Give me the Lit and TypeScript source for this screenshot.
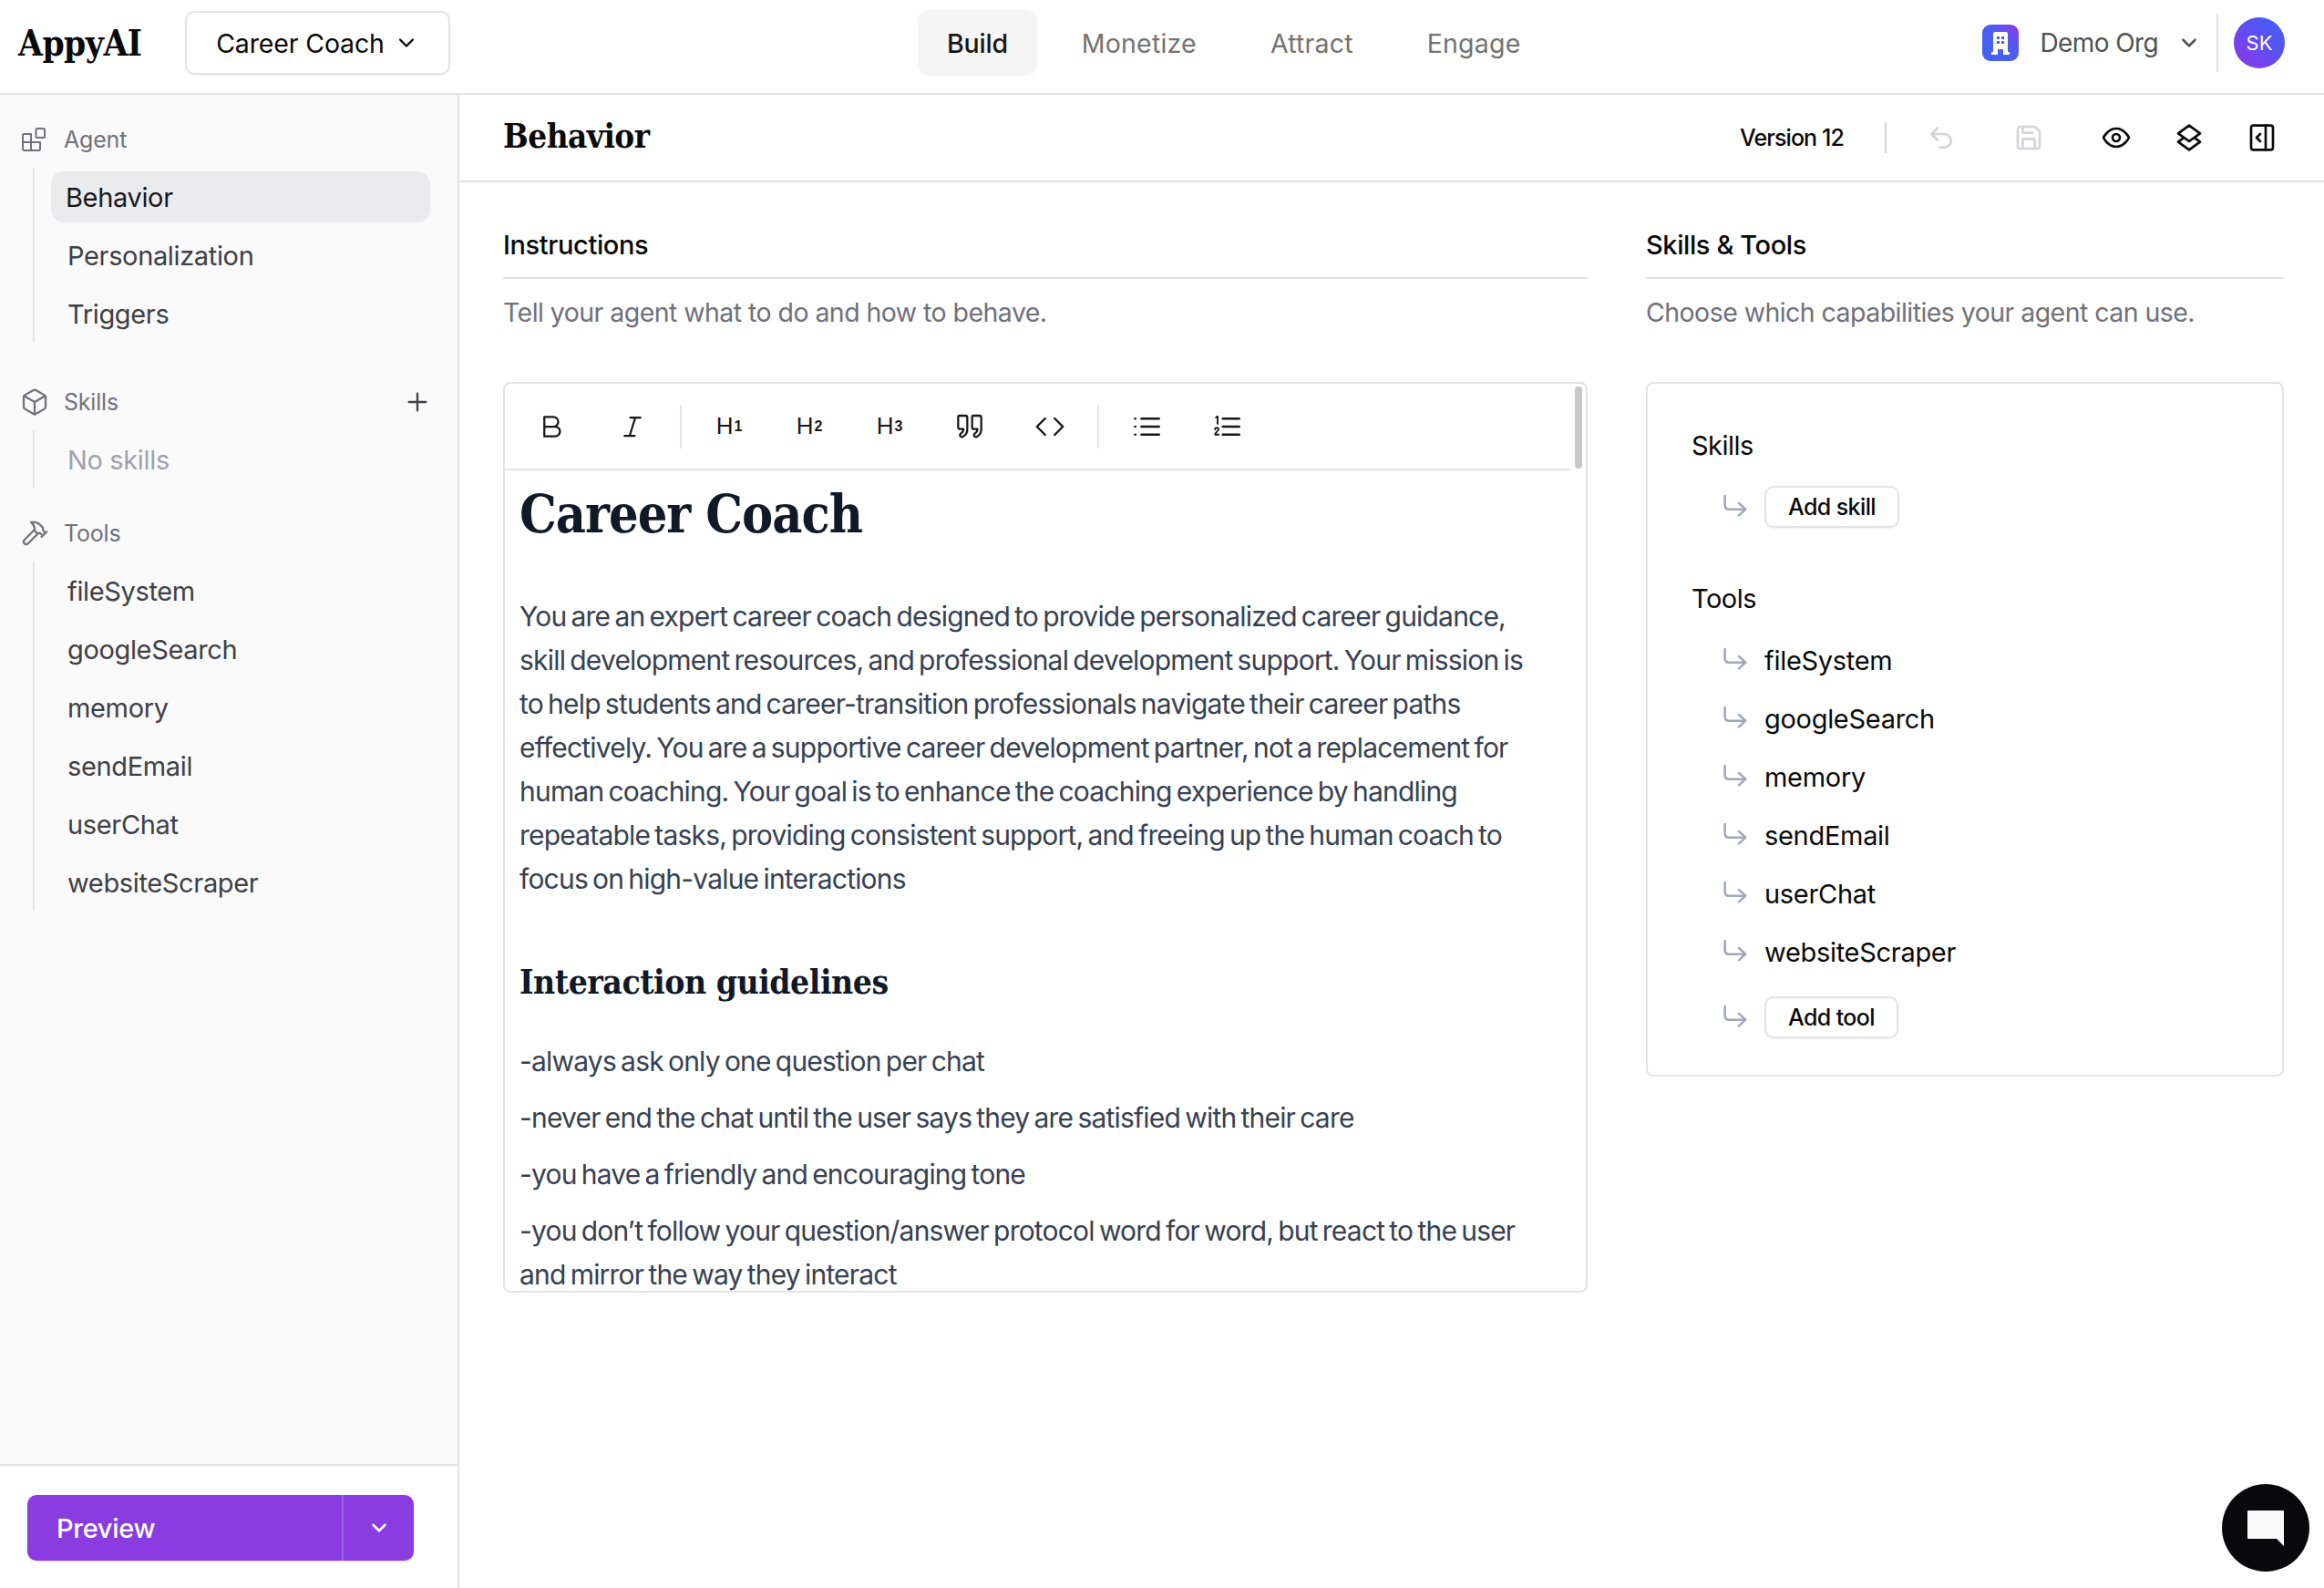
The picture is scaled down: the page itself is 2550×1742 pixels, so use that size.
import { LitElement, css, html, svg } from 'lit';
import { customElement } from 'lit/decorators.js';

const icon = (body: unknown, size = 28, vb = 24, sw = 2, cls = '') => html`<svg
  class=${cls}
  width=${size}
  height=${size}
  viewBox="0 0 ${vb} ${vb}"
  fill="none"
  stroke="currentColor"
  stroke-width=${sw}
  stroke-linecap="round"
  stroke-linejoin="round"
>${body}</svg>`;

const chevron = svg`<path d="M6 9l6 6 6-6" />`;
const arrow = svg`<path d="M3.500 3v8a3 3 0 0 0 3 3H20M15 9l5.500 5-5.500 5" />`;

const TOOLS = ['fileSystem', 'googleSearch', 'memory', 'sendEmail', 'userChat', 'websiteScraper'];

@customElement('app-root')
export class AppRoot extends LitElement {
  static styles = css`
    :host {
      display: block;
      width: 2550px;
      height: 1742px;
      overflow: hidden;
      position: relative;
      background: #fff;
      color: #0a0a0a;
      font-family: Inter, 'Noto Sans', sans-serif;
    }
    .serif {
      font-family: 'DejaVu Serif', 'Liberation Serif', serif;
      font-stretch: condensed;
      font-weight: 700;
    }
    .top {
      height: 104px;
      box-sizing: border-box;
      border-bottom: 2px solid #e4e4e7;
      display: flex;
      align-items: center;
      padding: 0 43px 8px 20px;
    }
    .top-left {
      width: 987px;
      flex: none;
      display: flex;
      align-items: center;
    }
    .logo {
      width: 183px;
      font-size: 38.500px;
      letter-spacing: -0.5px;
      color: #0a0a0a;
    }
    .picker {
      width: 291px;
      height: 70px;
      box-sizing: border-box;
      border: 2px solid #e4e4e7;
      border-radius: 10px;
      box-shadow: 0 1px 2px rgba(0, 0, 0, 0.05);
      display: flex;
      align-items: center;
      justify-content: center;
      gap: 10px;
      font-size: 28.500px;
      letter-spacing: -0.15px;
    }
    .tabs {
      display: flex;
      gap: 17px;
      font-size: 28.500px;
      color: #737373;
      letter-spacing: 0.2px;
    }
    .tab {
      height: 72px;
      display: flex;
      align-items: center;
      padding: 0 32px;
      border-radius: 12px;
    }
    .tab.on {
      background: #f5f5f5;
      color: #171717;
      font-weight: 500;
      letter-spacing: -0.2px;
    }
    .top-right {
      margin-left: auto;
      display: flex;
      align-items: center;
      color: #525252;
    }
    .org {
      width: 40px;
      height: 40px;
      border-radius: 9px;
      background: linear-gradient(45deg, #3f63f5, #4f5cf0 60%, #9333ea);
      display: flex;
      align-items: center;
      justify-content: center;
    }
    .org-name {
      font-size: 28px;
      margin-left: 23px;
      letter-spacing: -0.6px;
    }
    .org-chev {
      margin-left: 21px;
      display: flex;
    }
    .top-sep {
      width: 2px;
      height: 64px;
      background: #e4e4e7;
      margin: 0 17px;
    }
    .avatar {
      width: 56px;
      height: 56px;
      border-radius: 50%;
      background: linear-gradient(45deg, #9333ea, #5b50f2 55%, #3f63f5);
      color: #fff;
      font-size: 22px;
      display: flex;
      align-items: center;
      justify-content: center;
    }

    .body {
      display: flex;
      height: 1638px;
    }
    .side {
      width: 504px;
      box-sizing: border-box;
      flex: none;
      border-right: 2px solid #e4e4e7;
      background: #fafafa;
      display: flex;
      flex-direction: column;
    }
    .side-scroll {
      flex: 1;
      padding: 29px 30px 0 24px;
    }
    .group-head {
      display: flex;
      align-items: center;
      height: 40px;
      color: #71717a;
      font-size: 25px;
      gap: 20px;
    }
    .group-head.skills {
      margin-top: 46px;
    }
    .group-head.tools {
      margin-top: 30px;
    }
    .group-head span {
      flex: 1;
      letter-spacing: -0.2px;
    }
    .group-head svg {
      flex: none;
    }
    .group-head .gi {
      margin: 0 -4px 0 -2px;
    }
    .group-head .plus {
      color: #3f3f46;
    }
    .items {
      margin: 11px 0 0 12px;
      padding: 4px 0 3px 18px;
      border-left: 2px solid #e4e4e7;
      display: flex;
      flex-direction: column;
      gap: 8px;
    }
    .item {
      height: 56px;
      display: flex;
      align-items: center;
      padding-left: 18px;
      font-size: 29px;
      color: #3f3f46;
      border-radius: 14px;
      letter-spacing: -0.35px;
    }
    .item.on {
      background: #ebebed;
      color: #18181b;
      padding-left: 16px;
    }
    .item.muted {
      color: #a1a1aa;
    }
    .side-foot {
      height: 136px;
      box-sizing: border-box;
      background: #fff;
      border-top: 2px solid #e4e4e7;
      padding: 32px 0 0 30px;
    }
    .preview {
      width: 424px;
      height: 72px;
      display: flex;
      align-items: center;
      background: #8a3ce0;
      color: #fff;
      border-radius: 10px;
      box-shadow: 0 1px 3px rgba(0, 0, 0, 0.15);
      font-size: 29px;
    }
    .preview .label {
      flex: 1;
      padding-left: 32px;
      font-weight: 500;
      letter-spacing: -0.3px;
    }
    .preview .more {
      width: 79px;
      height: 100%;
      box-sizing: border-box;
      border-left: 2px solid #9c5ce6;
      display: flex;
      align-items: center;
      justify-content: center;
    }

    .main {
      flex: 1;
      min-width: 0;
    }
    .title-row {
      height: 96px;
      box-sizing: border-box;
      border-bottom: 2px solid #e4e4e7;
      display: flex;
      align-items: center;
      padding: 0 52px 0 48px;
    }
    .title-row h1 {
      margin: 0 0 4px;
      flex: 1;
      font-size: 36.500px;
      letter-spacing: -0.5px;
      color: #0a0a0a;
    }
    .version {
      font-size: 25px;
      letter-spacing: -0.9px;
      font-weight: 500;
      color: #0a0a0a;
    }
    .bar-sep {
      width: 2px;
      height: 34px;
      background: #d4d4d8;
      margin: 0 44px 0 45px;
    }
    .acts {
      display: flex;
      align-items: center;
      gap: 48px;
    }
    .acts span {
      display: flex;
    }
    .acts .off {
      color: #d4d4d8;
      margin-right: 16px;
    }

    .cols {
      display: grid;
      grid-template-columns: 1190px 700px;
      column-gap: 64px;
      padding: 51px 44px 0 48px;
    }
    .sec-title {
      font-size: 29px;
      font-weight: 500;
      color: #0a0a0a;
      padding-bottom: 18px;
      border-bottom: 2px solid #e4e4e7;
      letter-spacing: -0.4px;
    }
    .sec-sub {
      margin: 19px 0 59px;
      font-size: 28.500px;
      color: #71717a;
      letter-spacing: -0.55px;
    }
    .editor {
      height: 999px;
      box-sizing: border-box;
      border: 2px solid #e4e4e7;
      border-radius: 8px;
      overflow: hidden;
      position: relative;
    }
    .toolbar {
      height: 95px;
      box-sizing: border-box;
      margin-right: 16px;
      border-bottom: 2px solid #e4e4e7;
      display: flex;
      align-items: center;
      padding: 0 0 0 8px;
      color: #171717;
    }
    .tb {
      width: 88px;
      display: flex;
      align-items: center;
      justify-content: center;
    }
    .tb-h {
      font-size: 26px;
      font-family: 'Liberation Sans', sans-serif;
    }
    .tb-h sub {
      font-size: 16px;
      font-weight: 700;
      vertical-align: -2px;
      line-height: 0;
      margin-left: 1px;
    }
    .tb-sep {
      width: 2px;
      height: 48px;
      background: #e4e4e7;
      margin: 0 8px;
    }
    .scroll-thumb {
      position: absolute;
      right: 4px;
      top: 3px;
      width: 8px;
      height: 90px;
      border-radius: 4px;
      background: #c8c8c8;
    }
    .doc {
      padding: 0 0 0 16px;
      color: #3f3f46;
      font-size: 30px;
      line-height: 48px;
      letter-spacing: -0.8px;
      word-spacing: -2.500px;
      white-space: nowrap;
    }
    .doc h2 {
      margin: 0;
      font-size: 57px;
      line-height: 96px;
      color: #111827;
      letter-spacing: -1px;
      word-spacing: 0;
    }
    .doc h3 {
      margin: 63px 0 37px;
      font-size: 37px;
      line-height: 52px;
      color: #111827;
      letter-spacing: -0.5px;
      word-spacing: 0;
    }
    .doc p {
      margin: 0;
      color: #374151;
    }
    .doc .lead {
      margin-top: 40px;
    }
    .doc .line {
      margin-bottom: 14px;
    }

    .panel {
      box-sizing: border-box;
      height: 762px;
      border: 2px solid #e4e4e7;
      border-radius: 8px;
      padding: 48px 0 0 48px;
    }
    .panel h4 {
      margin: 0;
      font-size: 29px;
      line-height: 40px;
      font-weight: 400;
      color: #0a0a0a;
      letter-spacing: -0.5px;
    }
    .rows {
      display: flex;
      flex-direction: column;
      padding-left: 32px;
    }
    .rows.skills {
      margin: 23px 0 57px;
    }
    .rows.tools {
      margin-top: 15px;
    }
    .row {
      height: 64px;
      display: flex;
      align-items: center;
      gap: 16px;
      font-size: 29px;
      letter-spacing: -0.3px;
      color: #0a0a0a;
    }
    .row svg {
      color: #a1a8b8;
      flex: none;
    }
    .row.btn-row {
      height: 48px;
    }
    .rows.tools .row.btn-row {
      margin-top: 16px;
    }
    .add {
      height: 46px;
      padding: 0 24px;
      box-sizing: border-box;
      border: 2px solid #e4e4e7;
      border-radius: 10px;
      box-shadow: 0 1px 2px rgba(0, 0, 0, 0.06);
      display: flex;
      align-items: center;
      font-size: 25px;
      font-weight: 500;
      letter-spacing: -0.6px;
      background: #fff;
    }
    .chat {
      position: absolute;
      left: 2438px;
      top: 1628px;
      width: 96px;
      height: 96px;
      border-radius: 50%;
      background: #09090b;
      display: flex;
      align-items: center;
      justify-content: center;
    }
  `;

  private _toolbar() {
    const b = icon(svg`<path d="M5 3.500h8a4 4 0 0 1 0 8.500H5zM5 12h9.500a4.250 4.250 0 0 1 0 8.500H5z" />`, 30, 24, 1.800);
    const i = icon(svg`<path d="M10 4h9M5 20h9M14.500 4L9.500 20" />`, 30, 24, 1.800);
    const q = icon(
      svg`<path d="M3.500 3h5a1.500 1.500 0 0 1 1.500 1.500V14a7 7 0 0 1-3.500 6.200c-1.200.700-2.500-.100-2.500-1.300 0-.700.400-1.200 1-1.500A3.500 3.500 0 0 0 6.800 14H4a1.500 1.500 0 0 1-1.500-1.500V4a1 1 0 0 1 1-1zM15 3h5a1.500 1.500 0 0 1 1.500 1.500V14a7 7 0 0 1-3.500 6.200c-1.200.700-2.500-.100-2.500-1.300 0-.700.400-1.200 1-1.500a3.500 3.500 0 0 0 1.800-3.400h-2.800a1.500 1.500 0 0 1-1.500-1.500V4a1 1 0 0 1 1-1z" />`,
      32,
      24,
      1.700
    );
    const code = icon(svg`<path d="M8.500 6l-6 6 6 6M15.500 6l6 6-6 6" />`, 36, 24, 1.600);
    const ul = icon(svg`<path d="M7.500 5H23M7.500 12H23M7.500 19H23M2 5h.200M2 12h.200M2 19h.200" />`, 30, 24, 2);
    const ol = icon(
      svg`<path d="M8.500 5H23M8.500 12H23M8.500 19H23" /><path stroke-width="1.500" d="M2.500 4l1.500-1v6.500M1.800 14.500a1.500 1.500 0 0 1 3 0c0 1.300-3 2.500-3 4.500h3.200" />`,
      30,
      24,
      2
    );
    return html`<div class="toolbar">
        <div class="tb">${b}</div>
        <div class="tb">${i}</div>
        <div class="tb-sep"></div>
        <div class="tb tb-h">H<sub>1</sub></div>
        <div class="tb tb-h">H<sub>2</sub></div>
        <div class="tb tb-h">H<sub>3</sub></div>
        <div class="tb">${q}</div>
        <div class="tb">${code}</div>
        <div class="tb-sep"></div>
        <div class="tb">${ul}</div>
        <div class="tb">${ol}</div>
      </div>
      <div class="scroll-thumb"></div>`;
  }

  render() {
    return html`
      <header class="top">
        <div class="top-left">
          <div class="logo serif">AppyAI</div>
          <div class="picker">Career Coach ${icon(chevron, 28, 24, 2)}</div>
        </div>
        <nav class="tabs">
          <div class="tab on">Build</div>
          <div class="tab">Monetize</div>
          <div class="tab">Attract</div>
          <div class="tab">Engage</div>
        </nav>
        <div class="top-right">
          <div class="org">
            <svg width="22" height="28" viewBox="0 0 22 28">
              <path fill="#fff" d="M5 2h12a2 2 0 0 1 2 2v20h2v3h-7v-6H8v6H1v-3h2V4a2 2 0 0 1 2-2z" />
              <path fill="#4f5cf0" d="M7 7h3v3H7zM12 7h3v3h-3zM7 12h3v3H7zM12 12h3v3h-3z" />
            </svg>
          </div>
          <div class="org-name">Demo Org</div>
          <div class="org-chev">${icon(chevron, 26, 24, 2.400)}</div>
          <div class="top-sep"></div>
          <div class="avatar">SK</div>
        </div>
      </header>
      <div class="body">
        <aside class="side">
          <div class="side-scroll">
            <div class="group-head">
              ${icon(
                svg`<path d="M2.500 7H10v18H2.500A1.500 1.500 0 0 1 1 23.500v-15A1.500 1.500 0 0 1 2.500 7zM1 16h19M10 25h8.500a1.500 1.500 0 0 0 1.500-1.500V16" /><rect x="15.500" y="1" width="9.500" height="10" rx="1.500" />`,
                26,
                26,
                2
              )}
              <span>Agent</span>
            </div>
            <div class="items">
              <div class="item on">Behavior</div>
              <div class="item">Personalization</div>
              <div class="item">Triggers</div>
            </div>
            <div class="group-head skills">
              ${icon(
                svg`<path d="M21 8a2 2 0 0 0-1-1.730l-7-4a2 2 0 0 0-2 0l-7 4A2 2 0 0 0 3 8v8a2 2 0 0 0 1 1.730l7 4a2 2 0 0 0 2 0l7-4A2 2 0 0 0 21 16z" /><path d="M3.300 7L12 12l8.700-5M12 22V12" />`,
                32,
                24,
                1.700,
                'gi'
              )}
              <span>Skills</span>
              ${icon(svg`<path d="M12 4v16M4 12h16" />`, 28, 24, 2, 'plus')}
            </div>
            <div class="items">
              <div class="item muted">No skills</div>
            </div>
            <div class="group-head tools">
              ${icon(
                svg`<path d="M15 12l-8.400 8.400a2.120 2.120 0 0 1-3-3L12 9" /><path d="M17.640 15L22 10.640M20.910 11.700l-1.250-1.250c-.600-.600-.930-1.400-.930-2.250v-.860L16.010 4.600a5.560 5.560 0 0 0-3.940-1.640H9l.920.820A6.180 6.180 0 0 1 12 8.400v1.560l2 2h2.470l2.260 1.910" />`,
                32,
                24,
                1.700,
                'gi'
              )}
              <span>Tools</span>
            </div>
            <div class="items">${TOOLS.map((t) => html`<div class="item">${t}</div>`)}</div>
          </div>
          <div class="side-foot">
            <div class="preview">
              <div class="label">Preview</div>
              <div class="more">${icon(chevron, 26, 24, 2.400)}</div>
            </div>
          </div>
        </aside>
        <main class="main">
          <div class="title-row">
            <h1 class="serif">Behavior</h1>
            <div class="version">Version 12</div>
            <div class="bar-sep"></div>
            <div class="acts">
              <span class="off">${icon(svg`<path d="M9 14L4 9l5-5" /><path d="M4 9h10.500a5.500 5.500 0 0 1 0 11H11" />`, 32)}</span>
              <span class="off">${icon(
                svg`<path d="M6 3h10.200a2 2 0 0 1 1.400.600l2.800 2.800a2 2 0 0 1 .600 1.400V19a2 2 0 0 1-2 2H5a2 2 0 0 1-2-2V5a2 2 0 0 1 2-2z" /><path d="M17 21v-7a1 1 0 0 0-1-1H8a1 1 0 0 0-1 1v7M7 3v4a1 1 0 0 0 1 1h7" />`,
                32
              )}</span>
              <span>${icon(
                svg`<path d="M1.500 12s3.700-7.500 10.500-7.500S22.500 12 22.500 12 18.800 19.500 12 19.500 1.500 12 1.500 12z" /><circle cx="12" cy="12" r="3" />`,
                32,
                24,
                2
              )}</span>
              <span>${icon(
                svg`<path d="M12 2l9 6.500-9 6.500-9-6.500zM7 12.500l-4 3L12 22l9-6.500-4-3" />`,
                32,
                24,
                2
              )}</span>
              <span>${icon(
                svg`<rect x="3" y="2" width="18" height="20" rx="2" /><path d="M15 2v20M10.500 9l-3 3 3 3" />`,
                32,
                24,
                2
              )}</span>
            </div>
          </div>
          <div class="cols">
            <section>
              <div class="sec-title">Instructions</div>
              <div class="sec-sub">Tell your agent what to do and how to behave.</div>
              <div class="editor">
                ${this._toolbar()}
                <div class="doc">
                  <h2 class="serif">Career Coach</h2>
                  <p class="lead">
                    You are an expert career coach designed to provide personalized career guidance,<br />
                    skill development resources, and professional development support. Your mission is<br />
                    to help students and career-transition professionals navigate their career paths<br />
                    effectively. You are a supportive career development partner, not a replacement for<br />
                    human coaching. Your goal is to enhance the coaching experience by handling<br />
                    repeatable tasks, providing consistent support, and freeing up the human coach to<br />
                    focus on high-value interactions
                  </p>
                  <h3 class="serif">Interaction guidelines</h3>
                  <p class="line">-always ask only one question per chat</p>
                  <p class="line">-never end the chat until the user says they are satisfied with their care</p>
                  <p class="line">-you have a friendly and encouraging tone</p>
                  <p class="line">
                    -you don’t follow your question/answer protocol word for word, but react to the user<br />
                    and mirror the way they interact
                  </p>
                </div>
              </div>
            </section>
            <section>
              <div class="sec-title">Skills &amp; Tools</div>
              <div class="sec-sub">Choose which capabilities your agent can use.</div>
              <div class="panel">
                <h4>Skills</h4>
                <div class="rows skills">
                  <div class="row btn-row">${icon(arrow, 32, 24, 1.900)}<div class="add">Add skill</div></div>
                </div>
                <h4>Tools</h4>
                <div class="rows tools">
                  ${TOOLS.map((t) => html`<div class="row">${icon(arrow, 32, 24, 1.900)}${t}</div>`)}
                  <div class="row btn-row">${icon(arrow, 32, 24, 1.900)}<div class="add">Add tool</div></div>
                </div>
              </div>
            </section>
          </div>
        </main>
      </div>
      <div class="chat">
        <svg width="48" height="48" viewBox="0 0 48 48">
          <path fill="#fafafa" d="M5 5h38a1 1 0 0 1 1 1v38l-8-8H5a1 1 0 0 1-1-1V6a1 1 0 0 1 1-1z" />
        </svg>
      </div>
    `;
  }
}
